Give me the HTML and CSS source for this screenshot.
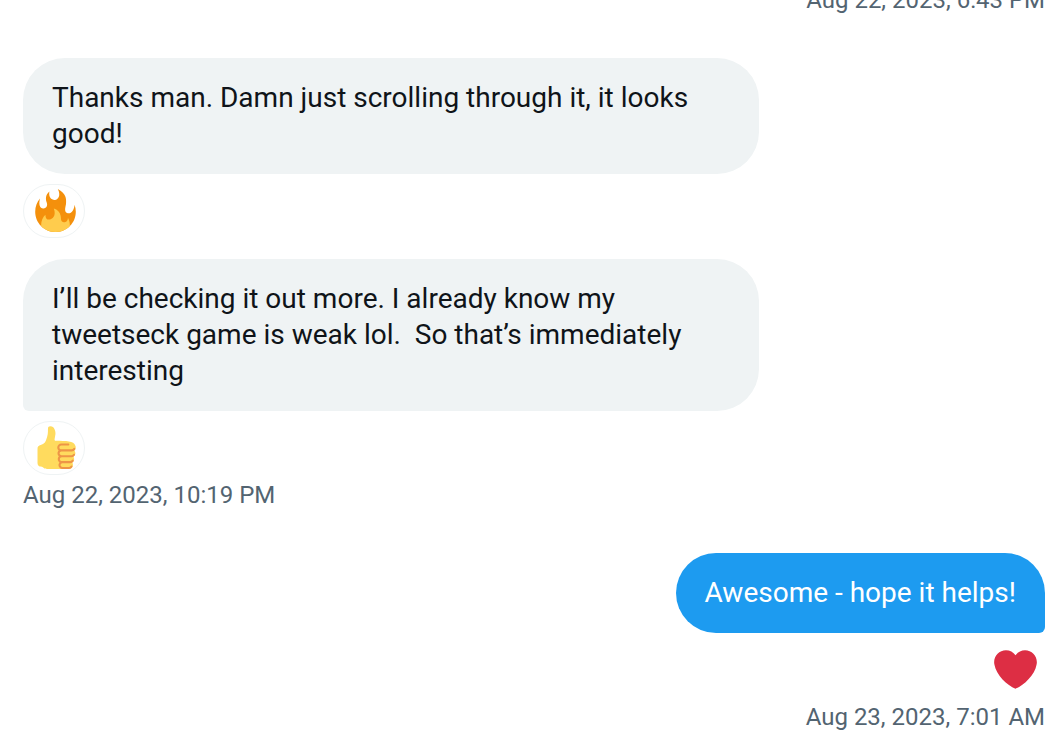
FILE: index.html
```html
<!DOCTYPE html>
<html lang="en">
<head>
<meta charset="utf-8">
<meta name="viewport" content="width=device-width, initial-scale=1">
<title>Messages</title>
<link rel="stylesheet" href="styles.css">
</head>
<body>
<main class="conversation">
  <section class="group group-sent">
    <time class="stamp" datetime="2023-08-22T18:43">Aug 22, 2023, 6:43 PM</time>
  </section>

  <section class="group">
    <div class="message">
      <p class="bubble">Thanks man. Damn just scrolling through it, it looks good!</p>
      <button class="reaction" type="button" aria-label="Fire">
        <svg class="emoji" viewBox="0 0 36 36" aria-hidden="true"><path fill="#F4900C" d="M35 19c0-2.062-.367-4.039-1.04-5.868-.46 5.389-3.333 8.157-6.335 6.868-2.812-1.208-.917-5.917-.777-8.164.236-3.809-.012-8.169-6.931-11.794 2.875 5.5.333 8.917-2.333 9.125-2.958.231-5.667-2.542-4.667-7.042-3.238 2.386-3.332 6.402-2.333 9 1.042 2.708-.042 4.958-2.583 5.208-2.84.28-4.418-3.041-2.963-8.333C2.52 10.965 1 14.805 1 19c0 9.389 7.611 17 17 17s17-7.611 17-17z"/><path fill="#FFCC4D" d="M28.394 23.999c.148 3.084-2.561 4.293-4.019 3.709-2.106-.843-1.541-2.291-2.083-5.291s-2.625-5.083-5.708-6c2.25 6.333-1.247 8.667-3.08 9.084-1.872.426-3.753-.001-3.968-4.007C7.352 23.668 6 26.676 6 30c0 .368.023.73.055 1.09C9.125 34.124 13.342 36 18 36s8.875-1.876 11.945-4.91c.032-.36.055-.722.055-1.09 0-2.187-.584-4.236-1.606-6.001z"/></svg>
      </button>
    </div>
    <div class="message">
      <p class="bubble bubble-last">I’ll be checking it out more. I already know my tweetseck game is weak lol.&nbsp; So that’s immediately interesting</p>
      <button class="reaction" type="button" aria-label="Thumbs up">
        <svg class="emoji" viewBox="0 0 36 36" aria-hidden="true"><path fill="#FFDB5E" d="M34.956 17.916c0-.503-.12-.975-.321-1.404-1.341-4.326-7.619-4.01-16.549-4.221-1.493-.035-.639-1.798-.115-5.668.341-2.517-1.282-6.382-4.01-6.382-4.498 0-.171 3.548-4.148 12.322-2.125 4.688-6.875 2.062-6.875 6.771v10.719c0 1.833.18 3.595 2.758 3.885C8.195 34.219 7.633 36 11.238 36h18.044c1.838 0 3.333-1.496 3.333-3.334 0-.762-.267-1.456-.698-2.018 1.02-.571 1.72-1.649 1.72-2.899 0-.76-.266-1.454-.696-2.015 1.023-.57 1.725-1.649 1.725-2.901 0-.909-.368-1.733-.961-2.336.757-.611 1.251-1.535 1.251-2.581z"/><path fill="#EE9547" d="M23.02 21.249h8.604c1.17 0 2.268-.626 2.866-1.633.246-.415.109-.952-.307-1.199-.415-.247-.952-.108-1.199.307-.283.479-.806.775-1.361.775h-8.81c-.873 0-1.583-.71-1.583-1.583s.71-1.583 1.583-1.583H28.7c.483 0 .875-.392.875-.875s-.392-.875-.875-.875h-5.888c-1.838 0-3.333 1.495-3.333 3.333 0 1.025.475 1.932 1.205 2.544-.615.605-.998 1.445-.998 2.373 0 1.028.478 1.938 1.212 2.549-.611.604-.99 1.441-.99 2.367 0 1.12.559 2.108 1.409 2.713-.524.589-.852 1.356-.852 2.204 0 1.838 1.495 3.333 3.333 3.333h5.484c1.17 0 2.269-.625 2.867-1.632.247-.415.11-.952-.305-1.199-.416-.245-.953-.11-1.199.305-.285.479-.808.776-1.363.776h-5.484c-.873 0-1.583-.71-1.583-1.583s.71-1.583 1.583-1.583h6.506c1.17 0 2.27-.626 2.867-1.633.247-.416.11-.953-.305-1.199-.419-.251-.954-.11-1.199.305-.289.487-.799.777-1.363.777h-7.063c-.873 0-1.583-.711-1.583-1.584s.71-1.583 1.583-1.583h8.091c1.17 0 2.269-.625 2.867-1.632.247-.415.11-.952-.305-1.199-.417-.246-.953-.11-1.199.305-.289.486-.799.776-1.363.776H23.02c-.873 0-1.583-.71-1.583-1.583s.71-1.584 1.583-1.584z"/></svg>
      </button>
    </div>
    <time class="stamp" datetime="2023-08-22T22:19">Aug 22, 2023, 10:19 PM</time>
  </section>

  <section class="group group-sent">
    <div class="message">
      <p class="bubble bubble-last">Awesome - hope it helps!</p>
      <button class="reaction" type="button" aria-label="Heart">
        <svg class="emoji" viewBox="0 0 36 36" aria-hidden="true"><path fill="#DD2E44" d="M35.885 11.833c0-5.45-4.418-9.868-9.867-9.868-3.308 0-6.227 1.633-8.018 4.129-1.791-2.496-4.71-4.129-8.017-4.129-5.45 0-9.868 4.418-9.868 9.868 0 .772.098 1.52.266 2.241C1.751 22.587 11.216 31.568 18 34.034c6.783-2.466 16.249-11.447 17.617-19.959.17-.721.268-1.469.268-2.242z"/></svg>
      </button>
    </div>
    <time class="stamp" datetime="2023-08-23T07:01">Aug 23, 2023, 7:01 AM</time>
  </section>
</main>
</body>
</html>
```
FILE: styles.css
```css
* {
  box-sizing: border-box;
}

body {
  margin: 0;
  background: #ffffff;
  color: #0f1419;
  font-family: Roboto, "Liberation Sans", sans-serif;
}

/* The thread stays pinned to its newest message. */
.conversation {
  display: flex;
  flex-direction: column;
  justify-content: flex-end;
  gap: 44px;
  height: 100vh;
  padding: 0 13px 13px 23px;
  overflow: hidden;
}

.group,
.message {
  display: flex;
  flex-direction: column;
  align-items: flex-start;
  flex-shrink: 0;
}

.group-sent,
.group-sent .message {
  align-items: flex-end;
}

.message {
  width: 100%;
  gap: 10px;
}

.message + .message {
  margin-top: 21px;
}

.message + .stamp {
  margin-top: 6px;
}

.bubble {
  max-width: 72%;
  margin: 0;
  padding: 22px 29px;
  border-radius: 42px;
  background: #eff3f4;
  font-size: 28px;
  line-height: 36px;
}

.bubble-last {
  border-bottom-left-radius: 6px;
}

.group-sent .bubble {
  border-radius: 40px 40px 6px 40px;
  background: #1d9bf0;
  color: #ffffff;
}

.reaction {
  display: flex;
  align-items: center;
  justify-content: center;
  width: 62px;
  height: 54px;
  padding: 0 0 2px 2px;
  border: 1px solid #eff3f4;
  border-radius: 27px;
  background: #ffffff;
  cursor: pointer;
}

.group-sent .reaction {
  border-color: transparent;
}

.emoji {
  width: 43px;
  height: 43px;
}

.stamp {
  color: #536471;
  font-size: 24px;
  line-height: 28px;
}
```
